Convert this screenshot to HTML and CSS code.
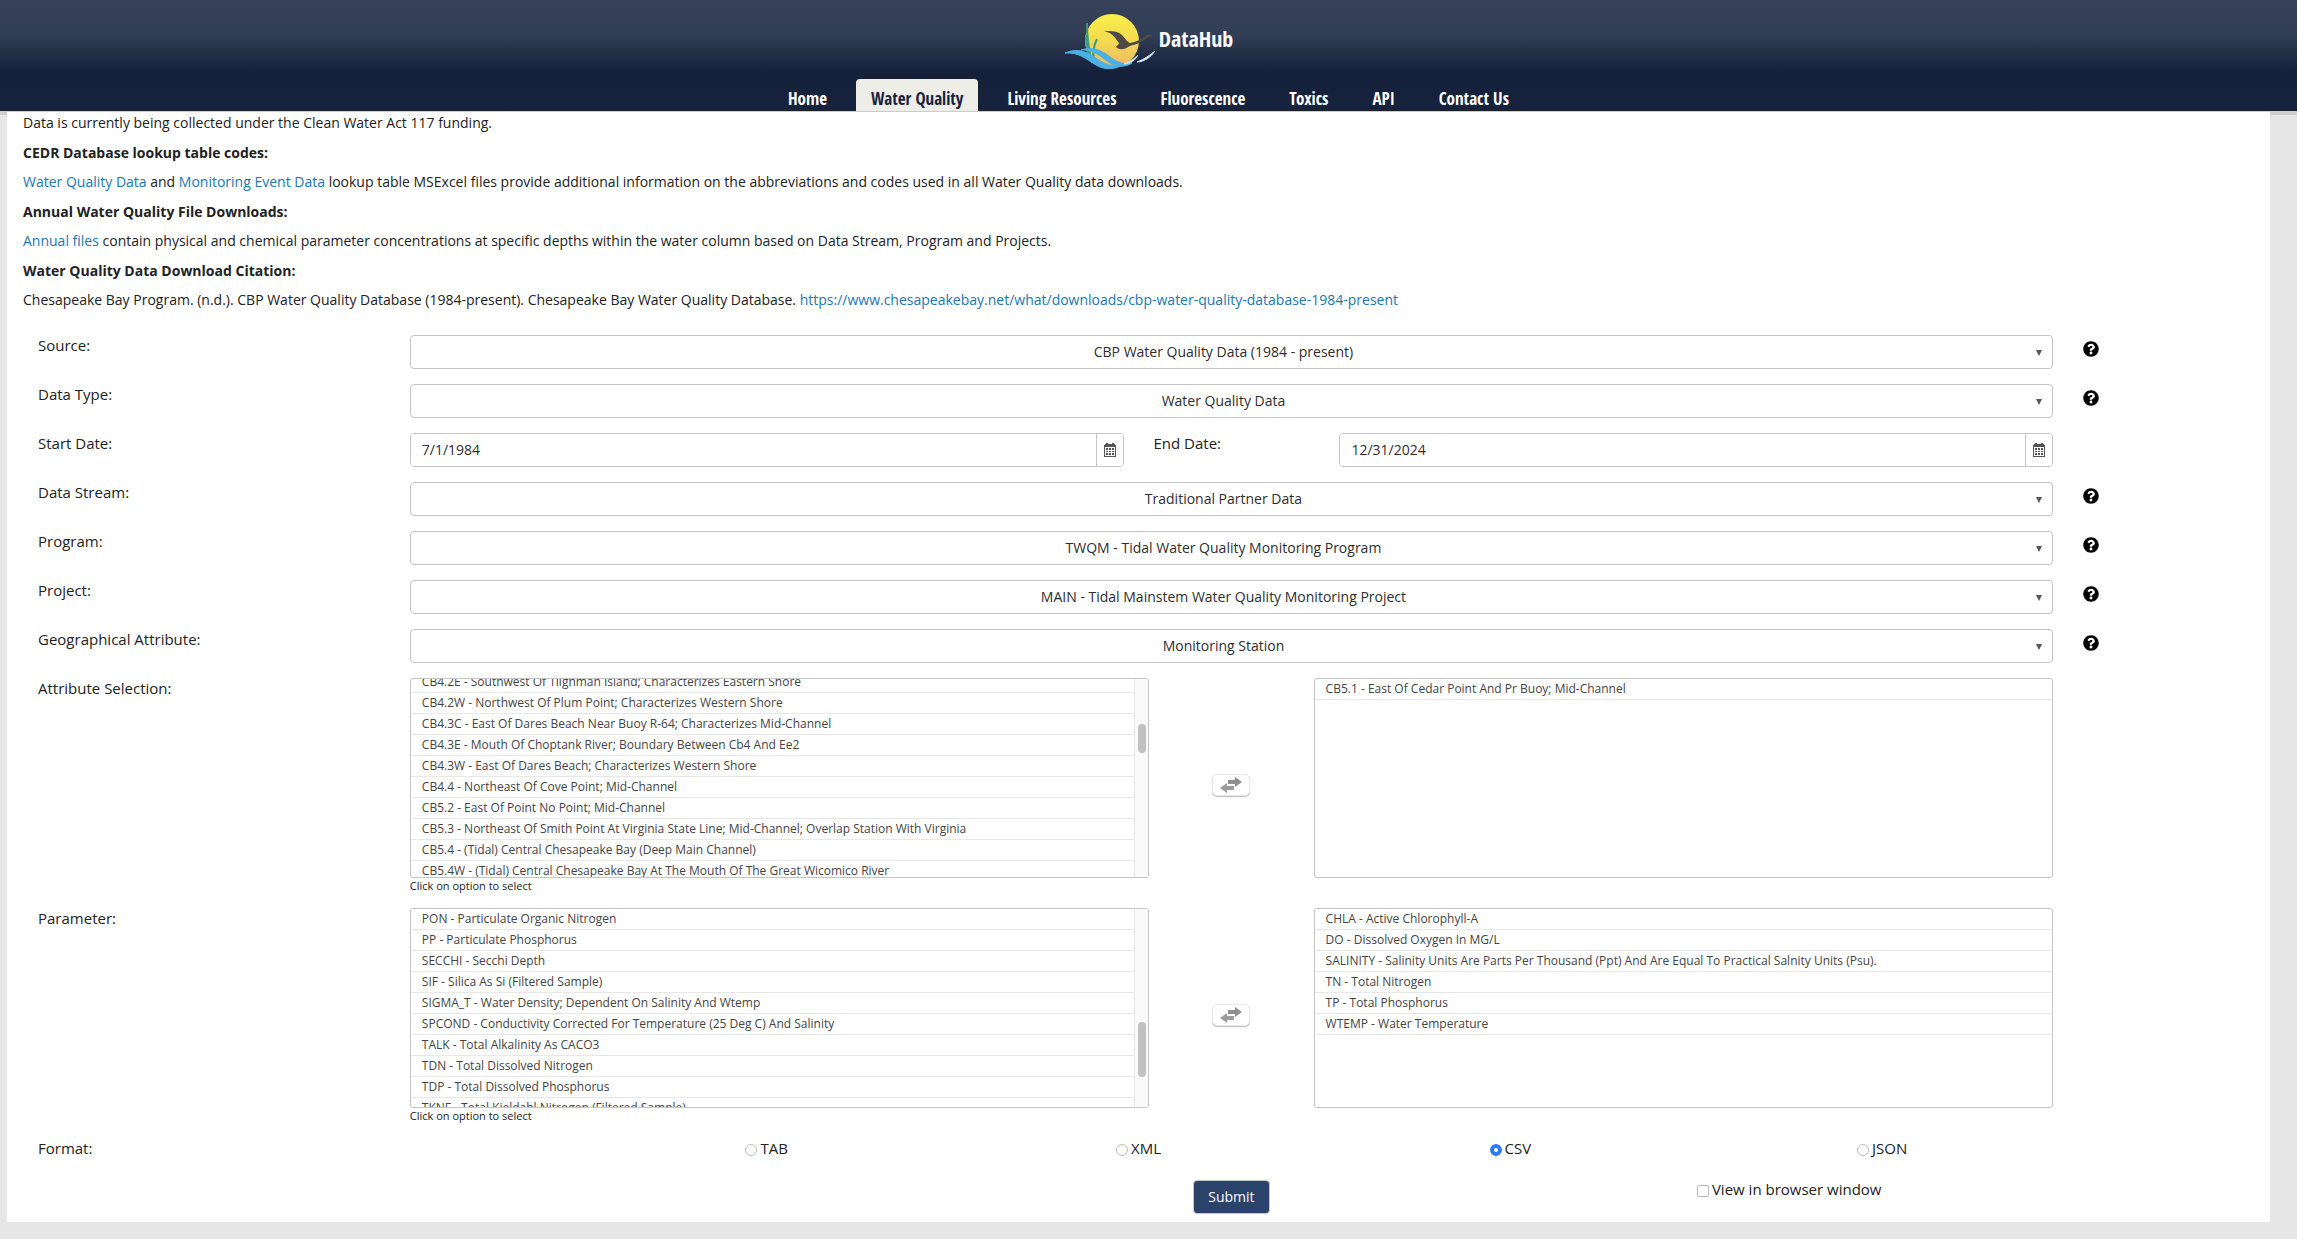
FILE: index.html
```html
<!DOCTYPE html>
<html lang="en">
<head>
<meta charset="utf-8">
<title>DataHub - Water Quality</title>
<link rel="stylesheet" href="styles.css">
</head>
<body>
<svg class="sprite" aria-hidden="true">
  <symbol id="help" viewBox="0 0 512 512"><path d="M504 256c0 137-111 248-248 248S8 393 8 256 119 8 256 8s248 111 248 248zM262.700 90c-54.500 0-89.200 23-116.500 63.800-3.500 5.300-2.400 12.400 2.700 16.300l34.700 26.300c5.200 3.900 12.600 3 16.700-2.100 17.900-22.700 30.100-35.800 57.300-35.800 20.400 0 45.700 13.100 45.700 33 0 15-12.400 22.700-32.500 34C247.100 238.500 216 254.900 216 296v4c0 6.600 5.400 12 12 12h56c6.600 0 12-5.400 12-12v-1.300c0-28.500 83.200-29.600 83.200-106.700 0-58-60.200-102-116.500-102zM256 338c-25.400 0-46 20.600-46 46s20.600 46 46 46 46-20.600 46-46-20.600-46-46-46z"/></symbol>
  <symbol id="calendar" viewBox="0 0 12 14"><path fill-rule="evenodd" d="M1 1h1v-1h2v1h4v-1h2v1h1v1h1v12H0V2h1zM1 4v9h10V4zM2 5h2v2H2zM5 5h2v2H5zM8 5h2v2H8zM2 8h2v1H2zM5 8h2v1H5zM8 8h2v1H8zM2 10h2v2H2zM5 10h2v2H5zM8 10h2v2H8z"/></symbol>
  <symbol id="swap" viewBox="0 0 22 16"><path d="M8 3h7V0l7 5-7 5V7H8z" fill="#8f8f8f"/><path d="M14 9H7V6L0 11l7 5v-3h7z" fill="#9c9c9c"/></symbol>
</svg>
<header class="site-header">
  <a class="brand" href="#">
    <svg class="logo" viewBox="0 0 92 58" aria-hidden="true">
      <defs><linearGradient id="sun" x1="0" y1="0" x2="0" y2="1"><stop offset="0" stop-color="#f9ee4a"/><stop offset=".5" stop-color="#f3d951"/><stop offset="1" stop-color="#f0b869"/></linearGradient></defs>
      <circle cx="48" cy="28" r="27" fill="url(#sun)"/>
      <path d="M40 18c8 0 14 0 18 4 3 3 5 7 8 8 6-1 10-3 14-6 3-3 6-3 9-2-5 2-9 5-14 8-4 2-8 2-11 4-4 3-9 3-12 0 1-2 3-2 3-4-4-5-6-10-15-12z" fill="#4d4a48"/>
      <path d="M23 10c0 14 2 28 5 40M33 26c-4 8-4 15-4 24M22 22c0 10 1 18 4 26M31 30c-2 8-2 12-1 20" fill="none" stroke="#3c9c7a" stroke-width="2"/>
      <path d="M1 40c9-4 18-3 26 2 10 6 17 13 30 10-6 5-17 5-25 0C22 46 15 39 1 40z" fill="#4bb0e4" stroke="#4bb0e4"/>
      <path d="M17 37c9-3 18-1 25 4s15 12 26 9c-7 5-17 4-25-2s-15-12-26-11z" fill="#4bb0e4" stroke="#4bb0e4"/>
      <path d="M60 51c6-2 10-5 14-9-3 5-7 9-14 9zM73 49c8-3 13-7 18-11-4 6-11 11-18 11z" fill="#cfe8f8" stroke="#cfe8f8"/>
    </svg>
    <span class="brand-name">DataHub</span>
  </a>
  <nav class="main-nav">
    <a href="#">Home</a>
    <a href="#" class="active" aria-current="page">Water Quality</a>
    <a href="#">Living Resources</a>
    <a href="#">Fluorescence</a>
    <a href="#">Toxics</a>
    <a href="#">API</a>
    <a href="#">Contact Us</a>
  </nav>
</header>
<main class="panel">
  <section class="intro">
    <p>Data is currently being collected under the Clean Water Act 117 funding.</p>
    <h2>CEDR Database lookup table codes:</h2>
    <p><a href="#">Water Quality Data</a> and <a href="#">Monitoring Event Data</a> lookup table MSExcel files provide additional information on the abbreviations and codes used in all Water Quality data downloads.</p>
    <h2>Annual Water Quality File Downloads:</h2>
    <p><a href="#">Annual files</a> contain physical and chemical parameter concentrations at specific depths within the water column based on Data Stream, Program and Projects.</p>
    <h2>Water Quality Data Download Citation:</h2>
    <p>Chesapeake Bay Program. (n.d.). CBP Water Quality Database (1984-present). Chesapeake Bay Water Quality Database. <a href="#">https://www.chesapeakebay.net/what/downloads/cbp-water-quality-database-1984-present</a></p>
  </section>
  <form class="query" onsubmit="return false">
    <div class="row">
      <label class="span-2" for="source">Source:</label>
      <div class="dropdown span-9"><select id="source"><option>CBP Water Quality Data (1984 - present)</option></select></div>
      <a class="help" href="#" aria-label="Help on source"><svg><use href="#help"/></svg></a>
    </div>
    <div class="row">
      <label class="span-2" for="type">Data Type:</label>
      <div class="dropdown span-9"><select id="type"><option>Water Quality Data</option></select></div>
      <a class="help" href="#" aria-label="Help on data type"><svg><use href="#help"/></svg></a>
    </div>
    <div class="row">
      <label class="span-2" for="start">Start Date:</label>
      <div class="date span-4"><input id="start" type="text" value="7/1/1984"><button type="button" aria-label="Pick start date"><svg><use href="#calendar"/></svg></button></div>
      <label for="end">End Date:</label>
      <div class="date span-4"><input id="end" type="text" value="12/31/2024"><button type="button" aria-label="Pick end date"><svg><use href="#calendar"/></svg></button></div>
    </div>
    <div class="row">
      <label class="span-2" for="stream">Data Stream:</label>
      <div class="dropdown span-9"><select id="stream"><option>Traditional Partner Data</option></select></div>
      <a class="help" href="#" aria-label="Help on data stream"><svg><use href="#help"/></svg></a>
    </div>
    <div class="row">
      <label class="span-2" for="program">Program:</label>
      <div class="dropdown span-9"><select id="program"><option>TWQM - Tidal Water Quality Monitoring Program</option></select></div>
      <a class="help" href="#" aria-label="Help on program"><svg><use href="#help"/></svg></a>
    </div>
    <div class="row">
      <label class="span-2" for="project">Project:</label>
      <div class="dropdown span-9"><select id="project"><option>MAIN - Tidal Mainstem Water Quality Monitoring Project</option></select></div>
      <a class="help" href="#" aria-label="Help on project"><svg><use href="#help"/></svg></a>
    </div>
    <div class="row">
      <label class="span-2" for="geo">Geographical Attribute:</label>
      <div class="dropdown span-9"><select id="geo"><option>Monitoring Station</option></select></div>
      <a class="help" href="#" aria-label="Help on geographical attribute"><svg><use href="#help"/></svg></a>
    </div>
    <div class="row">
      <span class="label span-2" id="attr-label">Attribute Selection:</span>
      <div class="transfer span-9">
        <div>
          <div class="listbox">
            <ul class="scrolled" role="listbox" aria-labelledby="attr-label">
              <li role="option">CB4.2E - Southwest Of Tilghman Island; Characterizes Eastern Shore</li>
              <li role="option">CB4.2W - Northwest Of Plum Point; Characterizes Western Shore</li>
              <li role="option">CB4.3C - East Of Dares Beach Near Buoy R-64; Characterizes Mid-Channel</li>
              <li role="option">CB4.3E - Mouth Of Choptank River; Boundary Between Cb4 And Ee2</li>
              <li role="option">CB4.3W - East Of Dares Beach; Characterizes Western Shore</li>
              <li role="option">CB4.4 - Northeast Of Cove Point; Mid-Channel</li>
              <li role="option">CB5.2 - East Of Point No Point; Mid-Channel</li>
              <li role="option">CB5.3 - Northeast Of Smith Point At Virginia State Line; Mid-Channel; Overlap Station With Virginia</li>
              <li role="option">CB5.4 - (Tidal) Central Chesapeake Bay (Deep Main Channel)</li>
              <li role="option">CB5.4W - (Tidal) Central Chesapeake Bay At The Mouth Of The Great Wicomico River</li>
            </ul>
            <div class="track"><div class="thumb" style="margin-top:45px;height:29px"></div></div>
          </div>
          <div class="hint">Click on option to select</div>
        </div>
        <button type="button" class="swap" aria-label="Move stations"><svg><use href="#swap"/></svg></button>
        <div class="listbox">
          <ul role="listbox" aria-label="Selected stations">
            <li role="option">CB5.1 - East Of Cedar Point And Pr Buoy; Mid-Channel</li>
          </ul>
        </div>
      </div>
    </div>
    <div class="row">
      <span class="label span-2" id="param-label">Parameter:</span>
      <div class="transfer span-9">
        <div>
          <div class="listbox">
            <ul role="listbox" aria-labelledby="param-label">
              <li role="option">PON - Particulate Organic Nitrogen</li>
              <li role="option">PP - Particulate Phosphorus</li>
              <li role="option">SECCHI - Secchi Depth</li>
              <li role="option">SIF - Silica As Si (Filtered Sample)</li>
              <li role="option">SIGMA_T - Water Density; Dependent On Salinity And Wtemp</li>
              <li role="option">SPCOND - Conductivity Corrected For Temperature (25 Deg C) And Salinity</li>
              <li role="option">TALK - Total Alkalinity As CACO3</li>
              <li role="option">TDN - Total Dissolved Nitrogen</li>
              <li role="option">TDP - Total Dissolved Phosphorus</li>
              <li role="option">TKNF - Total Kjeldahl Nitrogen (Filtered Sample)</li>
            </ul>
            <div class="track"><div class="thumb" style="margin-top:113px;height:55px"></div></div>
          </div>
          <div class="hint">Click on option to select</div>
        </div>
        <button type="button" class="swap" aria-label="Move parameters"><svg><use href="#swap"/></svg></button>
        <div class="listbox">
          <ul role="listbox" aria-label="Selected parameters">
            <li role="option">CHLA - Active Chlorophyll-A</li>
            <li role="option">DO - Dissolved Oxygen In MG/L</li>
            <li role="option">SALINITY - Salinity Units Are Parts Per Thousand (Ppt) And Are Equal To Practical Salnity Units (Psu).</li>
            <li role="option">TN - Total Nitrogen</li>
            <li role="option">TP - Total Phosphorus</li>
            <li role="option">WTEMP - Water Temperature</li>
          </ul>
        </div>
      </div>
    </div>
    <div class="row format">
      <span class="label span-3">Format:</span>
      <label class="choice span-2"><input type="radio" name="format">TAB</label>
      <label class="choice span-2"><input type="radio" name="format">XML</label>
      <label class="choice span-2"><input type="radio" name="format" checked>CSV</label>
      <label class="choice span-2"><input type="radio" name="format">JSON</label>
    </div>
    <div class="row actions">
      <div class="submit-cell"><button class="submit" type="submit">Submit</button></div>
      <label class="choice span-3"><input type="checkbox">View in browser window</label>
    </div>
  </form>
</main>
</body>
</html>
```
FILE: styles.css
```css
* { box-sizing: border-box; }
body {
  margin: 0;
  background: #e6e6e6;
  color: #222;
  font: 14px/20px "Open Sans", sans-serif;
}
a { color: #2077b2; text-decoration: none; }
.sprite { display: none; }

.site-header {
  display: flex;
  flex-direction: column;
  align-items: center;
  background: linear-gradient(#364059, #333f57 30%, #15213a 65%, #17223c);
  border-bottom: 1px solid #222;
  box-shadow: 0 4px #cfcfcf;
  font-family: "Open Sans Condensed", "Roboto Condensed", "Noto Sans CJK JP", sans-serif;
  font-weight: 700;
}
.brand {
  display: flex;
  align-items: center;
  gap: 3px;
  height: 79px;
  padding-bottom: 4px;
  color: #fff;
}
.logo { width: 92px; height: 58px; margin-top: 8px; }
.brand-name { font-size: 22px; line-height: 24px; }
.main-nav { display: flex; gap: 14px; }
.main-nav a {
  margin-bottom: -1px;
  padding: 8px 15px 0;
  border-radius: 4px 4px 0 0;
  color: #fff;
  font-size: 17px;
  line-height: 24px;
}
.main-nav .active { background: #eeeee9; color: #17223c; }

.panel {
  margin: 0 27px 16px 7px;
  padding: 1px 16px 8px;
  border-top: 1px solid #ccc;
  background: #fff;
}
.intro p { margin: 0 0 10px; }
.intro h2 { margin: 0 0 9px; font-size: 14px; font-weight: 700; }
.query { padding-top: 15px; font-size: 15px; }
.row {
  display: grid;
  grid-template-columns: repeat(12, 1fr);
  column-gap: 30px;
  align-items: start;
  margin: 0 15px 15px;
}
.span-2 { grid-column: span 2; }
.span-3 { grid-column: span 3; }
.span-4 { grid-column: span 4; }
.span-9 { grid-column: span 9; }

.dropdown { position: relative; }
.dropdown::after {
  content: "";
  position: absolute;
  top: 15px;
  right: 11px;
  border: 3px solid transparent;
  border-top: 6px solid #555;
  border-bottom: 0;
  pointer-events: none;
}
select, .date {
  width: 100%;
  height: 34px;
  border: 1px solid #c5c5c5;
  border-radius: 4px;
  background: #fff;
}
select {
  display: block;
  appearance: none;
  padding: 0 24px 0 8px;
  color: #2e2e2e;
  font: 14px/20px "Open Sans", sans-serif;
  text-align: center;
  text-align-last: center;
}
.date { display: flex; overflow: hidden; }
.date input {
  flex: 1;
  min-width: 0;
  padding: 0 11px;
  border: 0;
  color: #2e2e2e;
  font: 14px/20px "Open Sans", sans-serif;
}
.date button {
  display: grid;
  place-items: center;
  width: 27px;
  padding: 0;
  border: 0;
  border-left: 1px solid #c5c5c5;
  background: #fff;
}
.date svg { width: 12px; height: 14px; fill: #555; }
.help { display: block; padding-top: 6px; }
.help svg { display: block; width: 16px; height: 16px; fill: #000; }

.transfer {
  display: grid;
  grid-template-columns: 9fr 2fr 9fr;
  align-items: start;
}
.listbox {
  display: flex;
  height: 200px;
  overflow: hidden;
  border: 1px solid #c5c5c5;
  border-radius: 3px;
  background: #fff;
}
ul {
  flex: 1;
  margin: 0;
  padding: 0;
  list-style: none;
  color: #444;
  font-size: 12px;
  line-height: 20px;
}
ul.scrolled { margin-top: -7px; }
li { padding-left: 11px; border-bottom: 1px solid #e8e8e8; white-space: nowrap; }
.track { width: 14px; border-left: 1px solid #e8e8e8; background: #fafafa; }
.thumb { width: 8px; margin-left: 3px; border-radius: 4px; background: #c1c1c1; }
.hint { font-size: 11px; line-height: 15px; }
.swap {
  display: grid;
  place-self: center;
  place-items: center;
  width: 38px;
  height: 22px;
  margin-bottom: 2px;
  padding: 0;
  border: 1px solid #e8e8e8;
  border-radius: 5px;
  background: #fff;
  box-shadow: 0 1px 1px #bbb;
}
.swap svg { width: 22px; height: 16px; }

.choice { display: flex; justify-content: center; gap: 3px; }
.choice input {
  appearance: none;
  width: 12px;
  height: 12px;
  margin: 6px 0 0;
  border: 1px solid #bbb;
  border-radius: 2px;
  background: #fff;
}
.choice input[type="radio"] { border-radius: 50%; }
.choice input[type="radio"]:checked { border: 4px solid #2f7bf6; }
.format { margin-bottom: 21px; }
.actions { margin-bottom: 0; }
.submit-cell { grid-column: 6 / span 3; text-align: center; padding-top: 1px; }
.submit {
  height: 34px;
  padding: 0 14px;
  border: 1px solid #c5c5c5;
  border-radius: 4px;
  background: #2b426b;
  color: #fff;
  font: 14px/20px "Open Sans", sans-serif;
}
```
